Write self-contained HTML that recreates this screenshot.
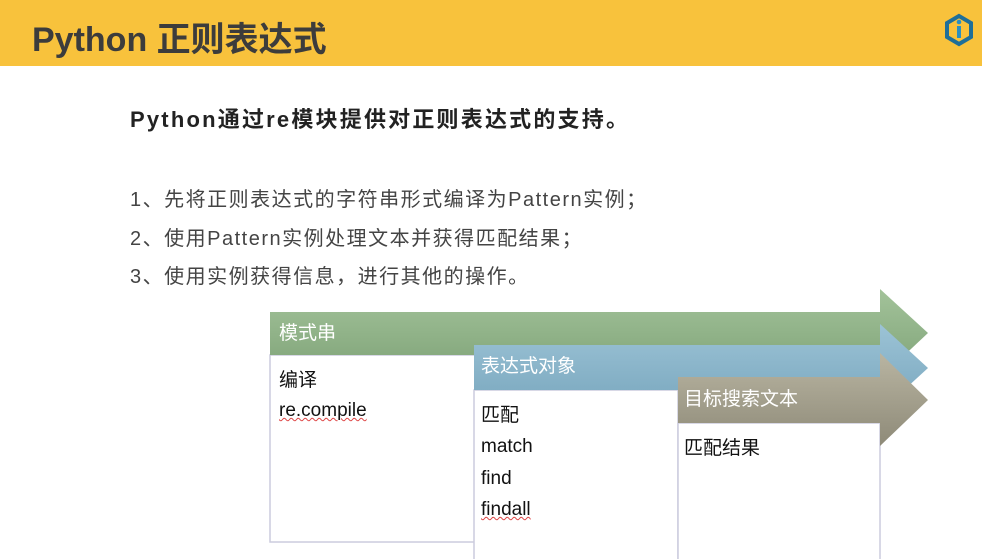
<!DOCTYPE html>
<html><head><meta charset="utf-8"><style>
body{margin:0;width:982px;height:559px;background:#fff;position:relative;overflow:hidden;font-family:"Liberation Sans","Noto Sans CJK SC",sans-serif;}
.hdr{position:absolute;left:0;top:0;width:982px;height:66px;background:#f8c23c;}
.title{position:absolute;left:32px;top:12px;font-size:34px;font-weight:bold;color:#3c3c3c;}
.t{position:absolute;white-space:nowrap;color:#333;}
.h{left:130px;top:102px;font-size:22px;letter-spacing:2.2px;font-weight:bold;color:#222;}
.li{left:130px;font-size:20px;letter-spacing:1.5px;color:#444;}
.b{position:absolute;font-size:19px;color:#111;white-space:nowrap;}
.w{color:#fff;font-size:19px;position:absolute;white-space:nowrap;}
</style></head><body>
<div class="hdr"></div>
<div class="title">Python 正则表达式</div>
<svg style="position:absolute;left:943px;top:13px" width="32" height="34" viewBox="0 0 32 34">
<path d="M16 3 L28 10 L28 24 L16 31 L4 24 L4 10 Z" fill="none" stroke="#1f6f99" stroke-width="4"/>
<rect x="14" y="13" width="4" height="12" fill="#2a8fc0"/><circle cx="16" cy="9" r="2.3" fill="#2a8fc0"/>
</svg>
<div class="t h">Python通过re模块提供对正则表达式的支持。</div>
<div class="t li" style="top:183px">1、先将正则表达式的字符串形式编译为Pattern实例；</div>
<div class="t li" style="top:222px">2、使用Pattern实例处理文本并获得匹配结果；</div>
<div class="t li" style="top:260px">3、使用实例获得信息，进行其他的操作。</div>
<svg style="position:absolute;left:0;top:0" width="982" height="559">
<defs>
<linearGradient id="g" x1="0" y1="0" x2="0" y2="1"><stop offset="0" stop-color="#a3c39a"/><stop offset="1" stop-color="#7ea277"/></linearGradient>
<linearGradient id="bl" x1="0" y1="0" x2="0" y2="1"><stop offset="0" stop-color="#9cc3d6"/><stop offset="1" stop-color="#78a6bd"/></linearGradient>
<linearGradient id="tn" x1="0" y1="0" x2="0" y2="1"><stop offset="0" stop-color="#b9b5a2"/><stop offset="1" stop-color="#8e8a78"/></linearGradient>
</defs>
<rect x="270" y="355" width="205" height="187" fill="#fff" stroke="#ccd" stroke-width="1.5"/>
<path d="M270 312 L880 312 L880 289 L928 333 L880 378 L880 355 L270 355 Z" fill="url(#g)"/>
<rect x="474" y="390" width="204" height="175" fill="#fff" stroke="#ccd" stroke-width="1.5"/>
<path d="M474 345 L880 345 L880 324 L928 368 L880 412 L880 390 L474 390 Z" fill="url(#bl)"/>
<rect x="678" y="423" width="202" height="145" fill="#fff" stroke="#ccd" stroke-width="1.5"/>
<path d="M678 377 L880 377 L880 353 L928 400 L880 446 L880 423 L678 423 Z" fill="url(#tn)"/>
</svg>
<div class="w" style="left:279px;top:318px">模式串</div>
<div class="w" style="left:481px;top:351px">表达式对象</div>
<div class="w" style="left:684px;top:384px">目标搜索文本</div>
<div class="b" style="left:279px;top:365px">编译</div>
<div class="b" style="left:279px;top:400px;text-decoration:underline wavy #d44;text-decoration-thickness:1px">re.compile</div>
<div class="b" style="left:481px;top:400px">匹配</div>
<div class="b" style="left:481px;top:436px">match</div>
<div class="b" style="left:481px;top:468px">find</div>
<div class="b" style="left:481px;top:499px;text-decoration:underline wavy #d44;text-decoration-thickness:1px">findall</div>
<div class="b" style="left:684px;top:433px">匹配结果</div>
</body></html>
